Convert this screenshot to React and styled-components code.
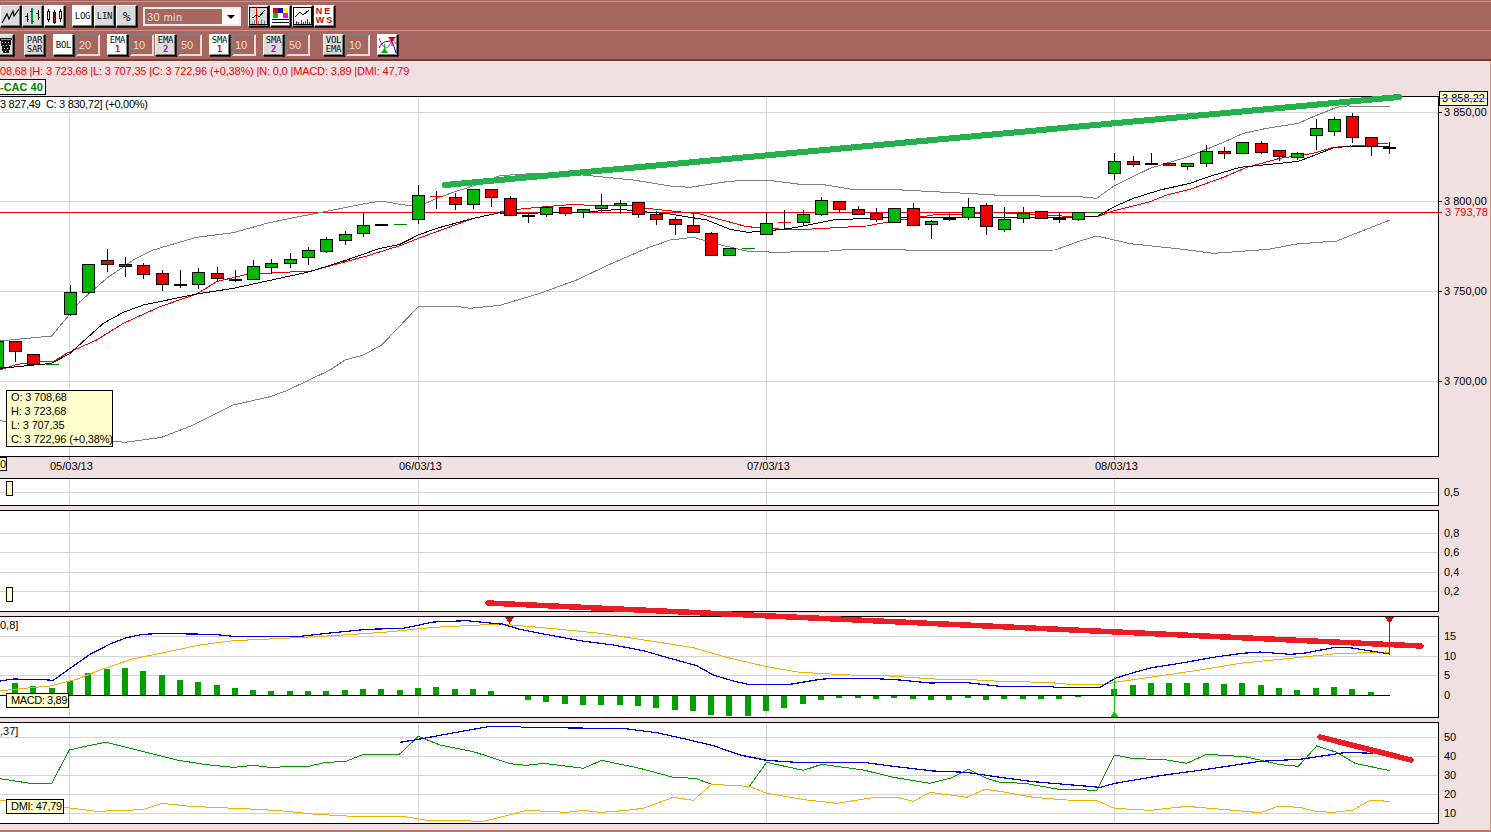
import styled, { createGlobalStyle } from 'styled-components';

const COLORS = {
  band: '#A5675F',
  bandLight: '#E0897E',
  bandDark: '#6E3F39',
  pink: '#F0E0E2',
  tip: '#FFFFCC',
  grid: '#D3D3D3',
  grey: '#808080',
  candleGreen: '#00B800',
  candleRed: '#F00000',
  barGreen: '#00A000',
  blue: '#0000D0',
  orange: '#F0B000',
  dmiGreen: '#009900',
  trendRed: '#ED1C24',
  trendGreen: '#22B14C',
};

const CHART_WIDTH = 1438;
const GRID_X = [69, 418, 766, 1114];

// readings taken off the picture, in 3x crops: [ox, oy, u, v, u, v, ...]
const seg = (ox, oy, flat) => {
  const out = [];
  for (let i = 0; i < flat.length; i += 2) out.push(`${ox + flat[i] / 3},${oy + flat[i + 1] / 3}`);
  return out;
};
const pts = (...segs) => segs.flat().join(' ');

const candleX = (i) => Math.round(15 + 18.32 * i);

const CANDLES = [
  [-1, 'g', 341, 367], [0, 'r', 341, 351, 341, 361], [1, 'r', 354, 364], [2, 'g', 364, 364],
  [3, 'g', 292, 314, 285, 315], [4, 'g', 264, 292, 264, 293], [5, 'r', 260, 264, 249, 271],
  [6, 'r', 264, 266, 257, 276], [7, 'r', 265, 274, 263, 278], [8, 'r', 273, 284, 270, 290],
  [9, 'k', 284, 284, 270, 287], [10, 'g', 272, 284, 268, 288], [11, 'r', 273, 278, 267, 280],
  [12, 'k', 279, 279, 270, 281], [13, 'g', 266, 279, 260, 279], [14, 'g', 263, 267, 259, 273],
  [15, 'g', 259, 263, 253, 267], [16, 'g', 250, 257, 247, 264], [17, 'g', 239, 251, 237, 252],
  [18, 'g', 234, 240, 231, 244], [19, 'g', 225, 233, 213, 236], [20, 'k', 224, 224], [21, 'g', 224, 224],
  [22, 'g', 195, 219, 185, 223], [23, 'r', 196, 196, 191, 208], [24, 'r', 197, 204, 193, 209],
  [25, 'g', 189, 204, 189, 208], [26, 'r', 189, 197, 189, 206], [27, 'r', 198, 215, 196, 215],
  [28, 'k', 215, 215, 213, 222], [29, 'g', 207, 214, 206, 216], [30, 'r', 207, 213, 207, 215],
  [31, 'g', 209, 212, 209, 217], [32, 'g', 205, 208, 194, 212], [33, 'g', 203, 205, 200, 213],
  [34, 'r', 202, 214, 202, 217], [35, 'r', 214, 219, 211, 224], [36, 'r', 219, 224, 217, 234],
  [37, 'r', 225, 232, 214, 232], [38, 'r', 233, 255, 232, 255], [39, 'g', 248, 255], [40, 'g', 248, 248],
  [41, 'g', 223, 234, 212, 234], [42, 'r', 222, 222, 210, 229], [43, 'g', 214, 222, 210, 225],
  [44, 'g', 200, 214, 197, 215], [45, 'r', 201, 209, 201, 211], [46, 'r', 209, 214, 206, 214],
  [47, 'r', 213, 219, 208, 221], [48, 'g', 208, 222], [49, 'r', 208, 225, 203, 225],
  [50, 'g', 221, 224, 220, 238], [51, 'k', 218, 218, 212, 220], [52, 'g', 207, 217, 198, 219],
  [53, 'r', 205, 226, 203, 234], [54, 'g', 219, 229, 207, 231], [55, 'g', 213, 218, 207, 222],
  [56, 'r', 211, 218], [57, 'k', 218, 218, 212, 222], [58, 'g', 212, 219, 212, 220], [59, 'g', 212, 212],
  [60, 'g', 161, 173, 153, 179], [61, 'r', 161, 164, 156, 166], [62, 'k', 163, 163, 153, 164],
  [63, 'r', 163, 165], [64, 'g', 163, 166, 163, 169], [65, 'g', 151, 163, 145, 166],
  [66, 'r', 151, 153, 147, 158], [67, 'g', 142, 153], [68, 'r', 143, 152, 141, 153],
  [69, 'r', 150, 156, 150, 160], [70, 'g', 153, 157, 152, 159], [71, 'g', 128, 135, 119, 149],
  [72, 'g', 119, 131, 117, 135], [73, 'r', 116, 137, 113, 142], [74, 'r', 137, 146, 137, 155],
  [75, 'k', 147, 147, 142, 153],
];

const MACD_BARS = [
  12, 9, 7, 14, 22, 26, 27, 24, 20, 15, 13, 10, 7, 5, 4, 4, 4, 4, 5, 6, 6, 5, 7, 8, 6, 6, 4, 0,
  -4, -6, -8, -9, -9, -9, -10, -12, -14, -15, -19, -20, -20, -15, -12, -8, -4, -2, -2, -3, -2, -3, -4, -4, -2, -4,
  -3, -3, -3, -3, -1, 0,
  6, 10, 12, 12, 12, 12, 11, 12, 10, 7, 5, 7, 8, 6, 3,
];

const BOLL_UP = pts(
  seg(0, 180, [0, 482, 30, 480, 155, 468, 240, 365, 320, 295, 400, 240, 460, 210, 510, 195, 590, 172, 700, 158, 800, 130, 870, 115, 960, 98, 1100, 70, 1145, 63, 1200, 73, 1255, 80, 1310, 55, 1365, 35, 1420, 18]),
  seg(500, 170, [0, 17, 110, 10, 250, 15, 400, 30, 510, 48, 570, 52, 680, 35, 740, 30, 800, 30, 900, 43, 970, 44, 1070, 60, 1170, 58, 1300, 65, 1400, 70, 1500, 76]),
  seg(1080, 90, [0, 320, 50, 325, 103, 287, 210, 235, 325, 200, 430, 157, 490, 130, 560, 115, 655, 100, 700, 80, 770, 52, 800, 48, 930, 49]),
);
const BOLL_LOW = pts(
  seg(0, 180, [0, 722, 18, 725, 340, 783, 375, 787, 485, 772, 580, 735, 700, 675, 810, 650, 860, 632, 990, 570, 1035, 540, 1090, 525, 1145, 495, 1255, 380, 1375, 380, 1410, 385, 1500, 376]),
  seg(500, 170, [120, 370, 235, 328, 320, 287, 440, 235, 510, 210, 580, 202, 650, 222, 740, 243, 830, 247, 990, 243, 1050, 238, 1210, 238, 1220, 241, 1500, 241]),
  seg(1000, 170, [165, 240]),
  seg(1080, 90, [0, 453, 50, 438, 103, 450, 150, 461, 310, 478, 400, 490, 565, 478, 650, 462, 770, 453, 930, 390]),
);
const EMA_BLACK = pts(
  seg(0, 180, [0, 565, 155, 550, 210, 520, 310, 430, 370, 397, 430, 375, 590, 342, 700, 325, 930, 275, 1040, 240, 1140, 205, 1200, 193, 1255, 165, 1310, 145, 1420, 115, 1500, 98]),
  seg(500, 170, [0, 132, 270, 125, 360, 118, 430, 125, 510, 132, 620, 150, 690, 178, 745, 187, 850, 178, 900, 170, 1000, 150, 1100, 145, 1200, 143, 1500, 142]),
  seg(1080, 90, [0, 381, 50, 380, 103, 350, 160, 325, 240, 300, 330, 280, 380, 262, 480, 232, 600, 220, 655, 214, 700, 197, 760, 174, 810, 168, 928, 170]),
);
const EMA_RED = pts(
  seg(0, 180, [0, 570, 50, 553, 130, 545, 160, 545, 200, 520, 290, 480, 370, 430, 480, 380, 590, 342, 650, 305, 740, 283, 800, 280, 840, 277, 930, 274, 1100, 228, 1200, 197, 1255, 175, 1420, 115, 1500, 98]),
  seg(500, 170, [0, 125, 70, 116, 220, 103, 300, 108, 400, 105, 440, 115, 600, 132, 740, 170, 880, 180, 1100, 168, 1170, 155, 1300, 135, 1500, 128]),
  seg(1080, 90, [0, 381, 50, 380, 103, 362, 210, 335, 260, 315, 330, 298, 430, 262, 500, 232, 600, 205, 700, 190, 760, 172, 860, 165, 925, 159]),
);
const MACD_BLUE = pts(
  seg(0, 470, [0, 633, 40, 627, 130, 629, 160, 631, 210, 595, 270, 553, 330, 522, 380, 503, 430, 493, 490, 490, 570, 492, 640, 493, 700, 499, 900, 499, 1000, 488, 1100, 478, 1210, 475, 1300, 456, 1400, 452, 1500, 462]),
  seg(500, 600, [0, 70, 60, 88, 120, 100, 240, 122, 340, 135, 430, 152, 510, 175, 590, 197, 640, 225, 700, 243, 745, 253, 870, 253, 960, 238, 1000, 235, 1110, 235, 1200, 240, 1290, 249, 1390, 247, 1500, 259]),
  seg(1000, 600, [155, 259, 165, 262, 300, 262, 345, 235, 400, 218, 455, 203, 540, 190, 640, 172, 725, 160, 780, 156, 870, 163, 910, 160, 1000, 143, 1050, 143, 1170, 162]),
);
const MACD_ORANGE = pts(
  seg(0, 470, [0, 663, 50, 657, 150, 648, 230, 628, 300, 600, 400, 566, 500, 546, 600, 525, 700, 512, 850, 505, 1000, 497, 1150, 487, 1300, 472, 1500, 462]),
  seg(500, 600, [0, 72, 150, 85, 300, 100, 420, 118, 580, 143, 680, 172, 800, 200, 900, 217, 1050, 225, 1150, 227, 1320, 238, 1430, 240, 1500, 244]),
  seg(1000, 600, [140, 247, 210, 253, 310, 253, 345, 247, 450, 232, 600, 210, 720, 190, 870, 175, 1000, 162, 1120, 157, 1170, 159]),
);
const DMI_GREEN = pts(
  seg(0, 470, [0, 926, 90, 940, 155, 940, 208, 840, 260, 828, 318, 817, 420, 842, 530, 870, 620, 884, 700, 892, 760, 886, 810, 892, 930, 888, 975, 878, 1040, 873, 1090, 853, 1198, 853, 1255, 799, 1320, 825, 1420, 845]),
  seg(500, 600, [0, 481, 30, 491, 80, 496, 130, 490, 250, 505, 305, 481, 420, 505, 520, 532, 585, 535, 635, 553, 748, 559, 800, 487, 910, 511, 965, 493, 1090, 510, 1180, 532, 1290, 550, 1350, 535, 1405, 508, 1460, 535, 1500, 547]),
  seg(1000, 600, [75, 550, 170, 567, 290, 571, 343, 465, 395, 475, 500, 480, 560, 490, 620, 463, 735, 470, 840, 494, 895, 499, 950, 438, 1010, 457, 1065, 490, 1170, 512]),
);
const DMI_ORANGE = pts(
  seg(0, 470, [0, 990, 20, 993, 195, 1012, 290, 1024, 400, 1020, 435, 1017, 485, 1000, 570, 1009, 730, 1016, 840, 1022, 950, 1033, 1060, 1039, 1210, 1039, 1280, 1051, 1340, 1051, 1450, 1054]),
  seg(500, 600, [0, 652, 80, 631, 200, 637, 250, 631, 300, 637, 370, 632, 430, 625, 520, 592, 580, 601, 635, 553, 748, 559, 800, 580, 920, 600, 1010, 610, 1125, 592, 1190, 592, 1240, 604, 1290, 577, 1400, 592, 1455, 568, 1500, 574]),
  seg(1000, 600, [100, 592, 200, 600, 290, 601, 343, 625, 450, 631, 560, 619, 700, 631, 780, 638, 835, 619, 900, 622, 945, 634, 1000, 637, 1060, 630, 1110, 601, 1170, 604]),
);
const DMI_BLUE = pts(
  seg(0, 470, [1200, 817, 1255, 808, 1380, 785, 1470, 769]),
  seg(500, 600, [0, 379, 60, 379, 65, 382, 225, 384, 375, 386, 470, 398, 560, 418, 640, 437, 720, 465, 800, 481, 890, 487, 1090, 487, 1180, 499, 1300, 513, 1400, 517, 1500, 532]),
  seg(1000, 600, [100, 545, 300, 562, 345, 550, 480, 527, 620, 508, 780, 484, 900, 478, 1040, 457, 1120, 460]),
);

const GlobalStyle = createGlobalStyle`
  html, body {
    margin: 0;
    width: 1491px;
    height: 832px;
    overflow: hidden;
    background: ${COLORS.pink};
    font-family: "Liberation Sans", Arial, sans-serif;
    font-size: 11px;
    color: #000;
  }
`;

const Page = styled.div`
  box-sizing: border-box;
  width: 1491px;
  height: 832px;
  border-top: 1px solid ${COLORS.band};
  display: flex;
  flex-direction: column;
`;

const ToolBand = styled.div`
  display: flex;
  align-items: flex-start;
  box-sizing: border-box;
  flex: none;
  height: ${(p) => p.$h}px;
  padding-top: 3px;
  background: ${COLORS.band};
  border-top: 1px solid ${COLORS.bandLight};
  border-bottom: ${(p) => (p.$last ? `2px solid ${COLORS.bandDark}` : 'none')};
  overflow: hidden;
`;

const ToolButton = styled.div`
  flex: none;
  box-sizing: border-box;
  width: 21px;
  height: 22px;
  margin-left: ${(p) => p.$ml ?? 1}px;
  padding-right: ${(p) => (p.$end ? 1 : 0)}px;
  display: flex;
  flex-direction: column;
  align-items: ${(p) => (p.$end ? 'flex-end' : 'center')};
  justify-content: center;
  background: ${(p) => (p.$white ? '#fff' : '#DBDBDB')};
  border: 1px solid;
  border-color: #fff #000 #000 #fff;
  box-shadow: inset -1px -1px 0 #808080, 1px 1px 0 #3c2320;
  color: #111;
  svg {
    display: block;
  }
`;

const ButtonText = styled.span`
  display: block;
  font-family: "DejaVu Sans Mono", "Liberation Mono", monospace;
  font-size: ${(p) => p.$size ?? 9}px;
  line-height: 9px;
  letter-spacing: -0.2px;
  text-align: center;
  white-space: nowrap;
  color: ${(p) => p.$color ?? '#111'};
  font-weight: ${(p) => (p.$color ? 700 : 400)};
`;

const NewsText = styled.span`
  color: #e00000;
  font-weight: 700;
  font-size: 9px;
  letter-spacing: 2px;
  line-height: 9px;
  margin-left: 1px;
`;

const ValueBox = styled.div`
  flex: none;
  box-sizing: border-box;
  width: 24px;
  height: 22px;
  margin-left: 2px;
  padding-left: 1px;
  display: flex;
  align-items: center;
  border: 2px solid;
  border-color: #7d7d7d #f0d8d4 #f0d8d4 #7d7d7d;
  color: #efdcd2;
  font-size: 11px;
`;

const Select = styled.div`
  flex: none;
  box-sizing: border-box;
  width: 98px;
  height: 19px;
  margin: 2px 0 0 6px;
  display: flex;
  align-items: center;
  justify-content: space-between;
  border: 2px solid #f4ebea;
  color: #efdcd2;
  padding-left: 2px;
  font-size: 11px;
  letter-spacing: 0.4px;
`;

const SelectArrow = styled.span`
  align-self: stretch;
  width: 17px;
  background: #fff;
  display: flex;
  align-items: center;
  justify-content: center;
  &::after {
    content: '';
    border-left: 4px solid transparent;
    border-right: 4px solid transparent;
    border-top: 4px solid #000;
  }
`;

const Body = styled.div`
  flex: 1;
  box-sizing: border-box;
  border-right: 1px solid ${COLORS.bandLight};
  border-bottom: 2px solid #c4756c;
  display: flex;
  flex-direction: column;
`;

const Readout = styled.div`
  height: 35px;
  display: flex;
  flex-direction: column;
  align-items: flex-start;
`;

const QuoteLine = styled.div`
  margin-top: 3px;
  height: 15px;
  line-height: 14px;
  color: #f00000;
  white-space: pre;
  letter-spacing: -0.16px;
`;

const InstrumentTag = styled.div`
  box-sizing: border-box;
  height: 16px;
  width: 46px;
  line-height: 14px;
  background: #fff;
  border: 1px solid #000;
  border-left: none;
  color: #008000;
  font-weight: 700;
  white-space: pre;
  overflow: hidden;
`;

const PanelRow = styled.section`
  flex: none;
  display: flex;
  height: ${(p) => p.$h}px;
  margin-top: ${(p) => p.$mt ?? 0}px;
`;

const PlotBox = styled.div`
  position: relative;
  flex: none;
  box-sizing: border-box;
  width: ${CHART_WIDTH + 1}px;
  height: 100%;
  background: #fff;
  border: 1px solid #000;
  border-left: none;
  svg {
    display: block;
    shape-rendering: crispEdges;
  }
`;

const Axis = styled.div`
  position: relative;
  flex: 1;
`;

const AxisLabel = styled.span`
  position: absolute;
  left: ${(p) => p.$left ?? 5}px;
  line-height: 14px;
  white-space: nowrap;
  color: ${(p) => p.$color ?? '#000'};
`;

const AxisTick = styled.i`
  position: absolute;
  left: 0;
  width: 3px;
  height: 1px;
  background: ${(p) => p.$color ?? COLORS.grid};
`;

const LastTag = styled.div`
  position: absolute;
  left: 0;
  top: -5px;
  box-sizing: border-box;
  width: 49px;
  height: 15px;
  line-height: 13px;
  text-align: center;
  background: ${COLORS.tip};
  border: 1px solid #000;
  &::after {
    content: '';
    position: absolute;
    left: 0;
    right: 0;
    top: 6px;
    height: 1px;
    background: #8c8cdc;
  }
`;

const Legend = styled.div`
  position: absolute;
  left: 0;
  top: 0;
  line-height: 14px;
  white-space: pre;
  letter-spacing: -0.3px;
`;

const TipBox = styled.div`
  position: absolute;
  left: 6px;
  top: ${(p) => p.$top}px;
  box-sizing: border-box;
  width: ${(p) => p.$w}px;
  height: ${(p) => p.$h}px;
  padding-left: 4px;
  background: ${COLORS.tip};
  border: 1px solid #000;
  line-height: ${(p) => p.$lh ?? 14}px;
  white-space: nowrap;
  letter-spacing: ${(p) => p.$tight ?? -0.15}px;
`;

const TipLines = styled.div`
  margin-top: -1px;
`;

const MiniMark = styled.div`
  position: absolute;
  left: 6px;
  top: ${(p) => p.$top}px;
  box-sizing: border-box;
  width: 7px;
  height: 15px;
  background: ${COLORS.tip};
  border: 1px solid #000;
`;

const PanelNote = styled.span`
  position: absolute;
  left: 0;
  top: ${(p) => p.$top}px;
  line-height: 14px;
`;

const DateBar = styled.div`
  position: relative;
  flex: none;
  height: 21px;
  margin-right: 52px;
`;

const DateLabel = styled.span`
  position: absolute;
  top: 2px;
  line-height: 14px;
  &::before {
    content: '';
    position: absolute;
    left: 19px;
    top: -2px;
    width: 1px;
    height: 3px;
    background: ${COLORS.grey};
  }
`;

const CornerTag = styled.div`
  position: absolute;
  left: 0;
  top: 0;
  box-sizing: border-box;
  width: 7px;
  height: 14px;
  line-height: 12px;
  background: ${COLORS.tip};
  border: 1px solid #000;
  border-left: none;
  overflow: hidden;
  direction: rtl;
`;

const TrendOverlay = styled.svg`
  position: absolute;
  left: 0;
  top: 0;
  pointer-events: none;
  shape-rendering: crispEdges;
`;

function Plot({ top, height, gridY = [], children }) {
  const inner = height - 2;
  return (
    <svg width={CHART_WIDTH} height={inner} viewBox={`0 ${top + 1} ${CHART_WIDTH} ${inner}`}>
      {GRID_X.map((x) => (
        <line key={x} x1={x + 0.5} x2={x + 0.5} y1={top} y2={top + height} stroke={COLORS.grid} />
      ))}
      {gridY.map((y) => (
        <line key={y} x1={0} x2={CHART_WIDTH} y1={y + 0.5} y2={y + 0.5} stroke={COLORS.grid} />
      ))}
      {children}
    </svg>
  );
}

function Candle({ i, kind, top, bottom, high = top, low = bottom }) {
  const x = candleX(i);
  const doji = top === bottom;
  const fill = kind === 'g' ? COLORS.candleGreen : COLORS.candleRed;
  return (
    <g>
      <line x1={x + 0.5} x2={x + 0.5} y1={high} y2={low + 1} stroke="#000" />
      {doji && kind === 'k' && <rect x={x - 6} y={top} width={13} height={2} fill="#000" />}
      {doji && kind !== 'k' && <rect x={x - 6} y={top} width={13} height={1} fill={kind === 'g' ? '#008000' : '#f00000'} />}
      {!doji && <rect x={x - 5.5} y={top + 0.5} width={12} height={bottom - top} fill={fill} stroke="#000" />}
    </g>
  );
}

function Trace({ points, color, width = 1 }) {
  return <polyline points={points} fill="none" stroke={color} strokeWidth={width} />;
}

function AxisMarks({ top, marks, tick }) {
  return marks.map(([y, label, left]) => (
    <span key={label}>
      <AxisTick $color={tick} style={{ top: y - top }} />
      <AxisLabel $left={left} style={{ top: y - top - 7 }}>{label}</AxisLabel>
    </span>
  ));
}

function LineIcon() {
  return (
    <svg width="19" height="18" viewBox="0 0 19 18">
      <polyline points="1,16 6,7 8,12 12,4 13,9 18,2" fill="none" stroke="#000" strokeWidth="1.2" />
    </svg>
  );
}

function BarsIcon() {
  const bar = (x, y1, y2, color, w) => (
    <g key={x}>
      <line x1={x} x2={x} y1={y1} y2={y2} stroke={color} strokeWidth={w} />
      <line x1={x - 2} x2={x} y1={y1 + 3} y2={y1 + 3} stroke="#000" />
      <line x1={x} x2={x + 2} y1={y2 - 3} y2={y2 - 3} stroke="#000" />
    </g>
  );
  return (
    <svg width="19" height="18" viewBox="0 0 19 18" shapeRendering="crispEdges">
      {bar(4, 6, 15, '#000', 1)}
      {bar(9, 1, 17, '#009040', 2)}
      {bar(15, 3, 13, '#000', 1)}
    </svg>
  );
}

function CandlesIcon() {
  const candle = (x, y1, y2, b1, b2, color) => (
    <g key={x}>
      <line x1={x} x2={x} y1={y1} y2={y2} stroke="#000" />
      <rect x={x - 1} y={b1} width={2} height={b2 - b1} fill={color} stroke="#000" />
    </g>
  );
  return (
    <svg width="19" height="18" viewBox="0 0 19 18" shapeRendering="crispEdges">
      {candle(3.5, 2, 15, 4, 12, '#fff')}
      {candle(9.5, 3, 17, 5, 15, '#e00000')}
      {candle(15.5, 2, 15, 4, 11, '#fff')}
    </svg>
  );
}

function VolumeLineIcon() {
  return (
    <svg width="19" height="18" viewBox="0 0 19 18" shapeRendering="crispEdges">
      <rect x="0.5" y="0.5" width="18" height="17" fill="none" stroke="#000" />
      <polyline points="3,11 8,8 10,10 16,3" fill="none" stroke="#000" />
      <path d="M3 15v2M5 13v4M9 14v3M12 12v5M15 14v3" stroke="#808080" />
      <line x1="7.5" x2="7.5" y1="0" y2="18" stroke="#e00000" />
    </svg>
  );
}

function PaletteIcon() {
  const cells = ['#e00000', '#0000e0', '#ffff00', '#00c000', '#ffffff', '#ff00ff'];
  return (
    <svg width="19" height="18" viewBox="0 0 19 18" shapeRendering="crispEdges">
      {cells.map((c, i) => (
        <rect key={c} x={2 + (i % 3) * 5} y={1 + Math.floor(i / 3) * 5} width={5} height={5} fill={c} />
      ))}
      <rect x="1" y="12" width="17" height="1" fill="#000" />
      <rect x="1" y="15" width="17" height="1" fill="#000" />
    </svg>
  );
}

function PriceVolumeIcon() {
  return (
    <svg width="19" height="18" viewBox="0 0 19 18" shapeRendering="crispEdges">
      <rect x="0.5" y="0.5" width="18" height="17" fill="none" stroke="#000" />
      <polyline points="2,10 7,5 10,8 16,3" fill="none" stroke="#000" />
      <path d="M3 14v3M5 15v2M8 13v4M10 15v2M12 14v3M14 12v5M16 15v2" stroke="#e00000" />
    </svg>
  );
}

function BasketIcon() {
  return (
    <svg width="12" height="15" viewBox="0 0 12 15" shapeRendering="crispEdges">
      <polygon points="0,0 12,0 9,15 3,15" fill="#111" />
      <rect x="1" y="1" width="10" height="1" fill="#888" />
      <path d="M2 4h1M5 4h1M8 4h1M3 7h1M6 7h1M9 7h1M4 10h1M7 10h1M5 13h1" stroke="#ddd" />
    </svg>
  );
}

function CrossSignalIcon() {
  return (
    <svg width="19" height="18" viewBox="0 0 19 18">
      <path d="M1 2 C6 14 9 14 12 8 S 16 4 18 8" fill="none" stroke="#e000e0" />
      <path d="M1 12 C5 4 9 6 12 5 S 16 12 18 17" fill="none" stroke="#0000e0" />
      <polygon points="10,1 18,1 14,6" fill="#e00000" />
      <rect x="13.5" y="5" width="1" height="5" fill="#e00000" />
      <polygon points="3,17 10,17 6.5,12" fill="#00b000" />
      <rect x="6" y="8" width="1" height="5" fill="#00b000" />
    </svg>
  );
}

function App() {
  return (
    <Page>
      <GlobalStyle />
      <ToolBand $h={29}>
        <ToolButton $ml={0}><LineIcon /></ToolButton>
        <ToolButton><BarsIcon /></ToolButton>
        <ToolButton $white><CandlesIcon /></ToolButton>
        <ToolButton $ml={7} $white><ButtonText>LOG</ButtonText></ToolButton>
        <ToolButton><ButtonText>LIN</ButtonText></ToolButton>
        <ToolButton><ButtonText $size={13}>%</ButtonText></ToolButton>
        <Select>30 min<SelectArrow /></Select>
        <ToolButton $ml={7}><VolumeLineIcon /></ToolButton>
        <ToolButton $white><PaletteIcon /></ToolButton>
        <ToolButton $white><PriceVolumeIcon /></ToolButton>
        <ToolButton $white><NewsText>NE<br />WS</NewsText></ToolButton>
      </ToolBand>
      <ToolBand $h={31} $last>
        <ToolButton $ml={-7} $end><BasketIcon /></ToolButton>
        <ToolButton $ml={10}><ButtonText>PAR</ButtonText><ButtonText>SAR</ButtonText></ToolButton>
        <ToolButton $ml={8} $white><ButtonText>BOL</ButtonText></ToolButton>
        <ValueBox>20</ValueBox>
        <ToolButton $ml={7} $white><ButtonText>EMA</ButtonText><ButtonText $color="#f00000">1</ButtonText></ToolButton>
        <ValueBox>10</ValueBox>
        <ToolButton $ml={1}><ButtonText>EMA</ButtonText><ButtonText $color="#c000c0">2</ButtonText></ToolButton>
        <ValueBox>50</ValueBox>
        <ToolButton $ml={7} $white><ButtonText>SMA</ButtonText><ButtonText $color="#f00000">1</ButtonText></ToolButton>
        <ValueBox>10</ValueBox>
        <ToolButton $ml={7}><ButtonText>SMA</ButtonText><ButtonText $color="#c000c0">2</ButtonText></ToolButton>
        <ValueBox>50</ValueBox>
        <ToolButton $ml={13}><ButtonText>VOL</ButtonText><ButtonText>EMA</ButtonText></ToolButton>
        <ValueBox>10</ValueBox>
        <ToolButton $ml={7} $white><CrossSignalIcon /></ToolButton>
      </ToolBand>

      <Body>
        <Readout>
          <QuoteLine>08,68 |H: 3 723,68 |L: 3 707,35 |C: 3 722,96 (+0,38%) |N: 0,0 |MACD: 3,89 |DMI: 47,79</QuoteLine>
          <InstrumentTag>-CAC 40</InstrumentTag>
        </Readout>

        <PanelRow $h={361}>
          <PlotBox>
            <Plot top={96} height={361} gridY={[112, 201, 291, 381]}>
              <line x1={0} x2={CHART_WIDTH} y1={212.5} y2={212.5} stroke="#f00000" />
              <Trace points={BOLL_UP} color={COLORS.grey} />
              <Trace points={BOLL_LOW} color={COLORS.grey} />
              <Trace points={EMA_RED} color="#f00000" />
              <Trace points={EMA_BLACK} color="#000" />
              {CANDLES.map(([i, kind, top, bottom, high, low]) => (
                <Candle key={i} i={i} kind={kind} top={top} bottom={bottom} high={high} low={low} />
              ))}
            </Plot>
            <Legend>3 827,49  C: 3 830,72] (+0,00%)</Legend>
            <TipBox $top={293} $w={107} $h={57}>
              <TipLines>O: 3 708,68<br />H: 3 723,68<br />L: 3 707,35<br />C: 3 722,96 (+0,38%)</TipLines>
            </TipBox>
          </PlotBox>
          <Axis>
            <LastTag>3 858,22</LastTag>
            <AxisMarks top={96} tick="#000" marks={[[112, '3 850,00'], [201, '3 800,00'], [291, '3 750,00'], [381, '3 700,00']]} />
            <AxisTick $color="#f00000" style={{ top: 116 }} />
            <AxisLabel $left={6} $color="#f00000" style={{ top: 109 }}>3 793,78</AxisLabel>
          </Axis>
        </PanelRow>

        <DateBar>
          <CornerTag>0</CornerTag>
          {[['05/03/13', 50], ['06/03/13', 399], ['07/03/13', 747], ['08/03/13', 1095]].map(([d, x]) => (
            <DateLabel key={d} style={{ left: x }}>{d}</DateLabel>
          ))}
        </DateBar>

        <PanelRow $h={28}>
          <PlotBox>
            <Plot top={478} height={28} gridY={[492]} />
            <MiniMark $top={2} />
          </PlotBox>
          <Axis><AxisMarks top={478} marks={[[492, '0,5']]} /></Axis>
        </PanelRow>

        <PanelRow $h={102} $mt={4}>
          <PlotBox>
            <Plot top={510} height={102} gridY={[533, 552, 572, 591]} />
            <MiniMark $top={76} />
          </PlotBox>
          <Axis><AxisMarks top={510} marks={[[533, '0,8'], [552, '0,6'], [572, '0,4'], [591, '0,2']]} /></Axis>
        </PanelRow>

        <PanelRow $h={102} $mt={4}>
          <PlotBox>
            <Plot top={616} height={102} gridY={[636, 656, 675]}>
              <line x1={0} x2={1390} y1={695.5} y2={695.5} stroke="#000" />
              {MACD_BARS.map((v, i) => (
                <rect key={i} x={candleX(i) - 3} y={v > 0 ? 695 - v : 696} width={6} height={Math.abs(v)} fill={COLORS.barGreen} />
              ))}
              <Trace points={MACD_ORANGE} color={COLORS.orange} />
              <Trace points={MACD_BLUE} color={COLORS.blue} width={1.2} />
              <polygon points="505,617 514,617 509.5,624" fill="#e00000" />
              <polygon points="1385,617 1394,617 1389.5,624" fill="#e00000" />
              <line x1={1389.5} x2={1389.5} y1={620} y2={654} stroke="#e00000" />
              <line x1={1114.5} x2={1114.5} y1={677} y2={716} stroke="#00cc00" />
              <polygon points="1110.5,717 1118.5,717 1114.5,711" fill="#00cc00" />
            </Plot>
            <PanelNote $top={1}>0,8]</PanelNote>
            <TipBox $top={76} $w={63} $h={15} $lh={13} $tight={-0.4}>MACD: 3,89</TipBox>
          </PlotBox>
          <Axis><AxisMarks top={616} marks={[[636, '15'], [656, '10'], [675, '5'], [695, '0']]} /></Axis>
        </PanelRow>

        <PanelRow $h={102} $mt={4}>
          <PlotBox>
            <Plot top={722} height={102} gridY={[737, 756, 775, 794, 813]}>
              <Trace points={DMI_GREEN} color={COLORS.dmiGreen} />
              <Trace points={DMI_ORANGE} color={COLORS.orange} />
              <Trace points={DMI_BLUE} color={COLORS.blue} width={1.2} />
            </Plot>
            <PanelNote $top={1}>,37]</PanelNote>
            <TipBox $top={76} $w={58} $h={15} $lh={13} $tight={-0.3}>DMI: 47,79</TipBox>
          </PlotBox>
          <Axis><AxisMarks top={722} marks={[[737, '50'], [756, '40'], [775, '30'], [794, '20'], [813, '10']]} /></Axis>
        </PanelRow>
      </Body>

      <TrendOverlay width={1491} height={832}>
        <line x1={445} y1={185} x2={1399} y2={97} stroke={COLORS.trendGreen} strokeWidth={6} strokeLinecap="round" />
        <line x1={488} y1={603} x2={1421} y2={646} stroke={COLORS.trendRed} strokeWidth={5.5} strokeLinecap="round" />
        <line x1={1320} y1={737} x2={1411} y2={760} stroke={COLORS.trendRed} strokeWidth={5.5} strokeLinecap="round" />
      </TrendOverlay>
    </Page>
  );
}

export default App;
